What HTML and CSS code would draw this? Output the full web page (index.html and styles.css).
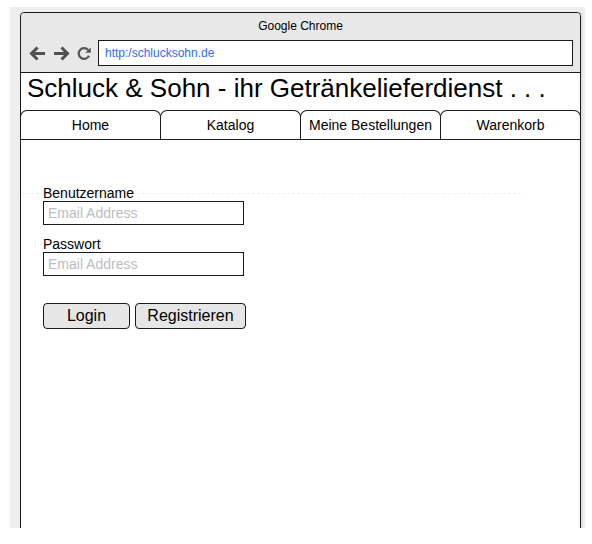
FILE: index.html
```html
<!DOCTYPE html>
<html>
<head>
<meta charset="utf-8">
<link rel="stylesheet" href="styles.css">
</head>
<body>
<div class="canvas">
  <div class="window">
    <div class="chrome">
      <div class="title">Google Chrome</div>
      <div class="toolbar">
        <div class="navicons">
          <svg width="19" height="17" viewBox="0 0 19 17"><path d="M17 8.5H3.5M9.5 2.5L3.5 8.5l6 6" fill="none" stroke="#505050" stroke-width="3"/></svg>
          <svg width="19" height="17" viewBox="0 0 19 17"><path d="M2 8.5h13.5M9.5 2.5l6 6-6 6" fill="none" stroke="#505050" stroke-width="3"/></svg>
          <svg width="16" height="17" viewBox="0 0 16 17"><path d="M13 10.8A5.4 5.4 0 1 1 12.2 5" fill="none" stroke="#555" stroke-width="2.2"/><path d="M14.8 2.4v5.4H9.4z" fill="#555"/></svg>
        </div>
        <div class="address">http:/schlucksohn.de</div>
      </div>
    </div>
    <h1 class="heading">Schluck &amp; Sohn - ihr Getränkelieferdienst . . .</h1>
    <div class="tabs">
      <div class="tab">Home</div>
      <div class="tab">Katalog</div>
      <div class="tab">Meine Bestellungen</div>
      <div class="tab">Warenkorb</div>
    </div>
    <div class="content">
      <div class="divider"></div>
      <form class="login">
        <label class="field">
          <span class="label">Benutzername</span>
          <input class="input" type="text" placeholder="Email Address">
        </label>
        <label class="field">
          <span class="label">Passwort</span>
          <input class="input" type="text" placeholder="Email Address">
        </label>
        <div class="buttons">
          <button type="button" class="btn btn-login">Login</button>
          <button type="button" class="btn btn-reg">Registrieren</button>
        </div>
      </form>
    </div>
  </div>
</div>
</body>
</html>
```
FILE: styles.css
```css
html, body {
  margin: 0;
  padding: 0;
  background: #fff;
}
body {
  font-family: "Liberation Sans", Arial, sans-serif;
  color: #000;
}
.canvas {
  margin: 7px 0 0 10px;
  width: 575px;
  height: 521px;
  background: #eeeeee;
  overflow: hidden;
  padding: 5px 0 0 10px;
  box-sizing: border-box;
}
.window {
  width: 561px;
  height: 540px;
  box-sizing: border-box;
  border: 1px solid #1a1a1a;
  border-radius: 4px 4px 0 0;
  background: #fff;
  box-shadow: 2px 0 0 #e2e2e2;
}
.chrome {
  background: #e8e8e8;
  border-bottom: 1px solid #1a1a1a;
  height: 59px;
  border-radius: 4px 4px 0 0;
}
.title {
  text-align: center;
  font-size: 12px;
  height: 12px;
  line-height: 12px;
  padding-top: 7px;
}
.toolbar {
  display: flex;
  align-items: center;
  margin-top: 8px;
  padding-left: 7px;
}
.navicons {
  display: flex;
  align-items: center;
  gap: 5px;
  width: 70px;
}
.navicons svg { display: block; }
.address {
  width: 475px;
  height: 26px;
  box-sizing: border-box;
  border: 1px solid #1a1a1a;
  background: #fff;
  color: #2f6df2;
  font-size: 12px;
  line-height: 24px;
  padding-left: 6px;
}
.heading {
  margin: 0;
  font-weight: normal;
  font-size: 26px;
  line-height: 30px;
  padding: 0 0 0 6px;
  height: 37px;
}
.tabs {
  display: flex;
  margin: 0 -1px;
  border-bottom: 1px solid #1a1a1a;
}
.tab {
  width: 141px;
  height: 29px;
  box-sizing: border-box;
  border: 1px solid #1a1a1a;
  border-bottom: none;
  border-radius: 7px 7px 0 0;
  text-align: center;
  font-size: 14px;
  line-height: 28px;
  margin-left: -1px;
}
.tab:first-child { margin-left: 0; }
.content {
  position: relative;
  padding: 46px 0 0 22px;
}
.divider {
  position: absolute;
  left: 0;
  top: 53px;
  width: 500px;
  border-top: 1px dashed #f0f0f0;
}
.login {
  position: relative;
  display: flex;
  flex-direction: column;
}
.field {
  display: flex;
  flex-direction: column;
  margin-bottom: 12px;
}
.label {
  font-size: 14px;
  line-height: 15px;
}
.input {
  width: 201px;
  height: 24px;
  box-sizing: border-box;
  border: 1px solid #1a1a1a;
  border-radius: 0;
  margin: 0;
  padding: 0 4px;
  font-family: "Liberation Sans", Arial, sans-serif;
  font-size: 14px;
  outline: none;
}
.input::placeholder { color: #bdbdbd; }
.buttons {
  display: flex;
  gap: 5px;
  margin-top: 15px;
}
.btn {
  height: 26px;
  box-sizing: border-box;
  border: 1px solid #1a1a1a;
  border-radius: 4px;
  background: #e6e6e6;
  font-family: "Liberation Sans", Arial, sans-serif;
  font-size: 16px;
  color: #000;
  padding: 0;
  margin: 0;
}
.btn-login { width: 87px; }
.btn-reg { width: 111px; }
```
